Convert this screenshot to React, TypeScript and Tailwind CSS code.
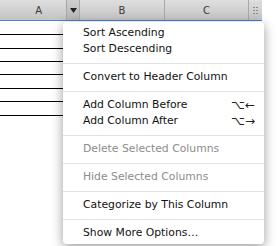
import React from 'react';

const font = { fontFamily: '"DejaVu Sans", "Liberation Sans", sans-serif' };

// y positions of the table's row lines, taken from the screenshot
const rowHeights = [14, 14, 13, 13, 14, 13, 14];

type Item = { label: string; shortcut?: string; disabled?: boolean } | 'sep';

const items: Item[] = [
  { label: 'Sort Ascending' },
  { label: 'Sort Descending' },
  'sep',
  { label: 'Convert to Header Column' },
  'sep',
  { label: 'Add Column Before', shortcut: '⌥←' },
  { label: 'Add Column After', shortcut: '⌥→' },
  'sep',
  { label: 'Delete Selected Columns', disabled: true },
  'sep',
  { label: 'Hide Selected Columns', disabled: true },
  'sep',
  { label: 'Categorize by This Column' },
  'sep',
  { label: 'Show More Options…' },
];

function Header() {
  return (
    <div className="flex h-[20px] w-[262px] bg-gradient-to-b from-[#dedede] to-[#c4c4c4] text-[10px] text-[#3a3a3a] border-b border-[#4a82d8] box-content">
      <div className="w-[67px] border-r border-[#a8a8a8] flex items-center justify-end pr-[24px]">A</div>
      <div className="w-[13px] border-r border-[#a8a8a8] bg-gradient-to-b from-[#cfcfcf] to-[#b6b6b6] flex items-center justify-center">
        <svg width="7" height="5" viewBox="0 0 7 5">
          <path d="M0 0 L7 0 L3.5 5 Z" fill="#222" />
        </svg>
      </div>
      <div className="w-[85px] border-r border-[#a8a8a8] flex items-center justify-center">B</div>
      <div className="w-[84px] border-r border-[#a8a8a8] flex items-center justify-center">C</div>
      <div className="flex-1 flex items-center justify-center">
        <svg width="7" height="9" viewBox="0 0 7 9">
          {[1, 4, 7].map(y => (
            <g key={y}>
              <rect x="1" y={y} width="2" height="1" fill="#8a8a8a" />
              <rect x="4" y={y} width="2" height="1" fill="#8a8a8a" />
            </g>
          ))}
        </svg>
      </div>
    </div>
  );
}

export default function App() {
  return (
    <div className="relative w-[279px] h-[246px] bg-white overflow-hidden" style={font}>
      <Header />

      <div className="w-[263px]">
        {rowHeights.map((h, i) => (
          <div key={i} className="border-b border-black" style={{ height: h }} />
        ))}
      </div>

      <div className="absolute left-[63px] top-[22px] w-[201px] bg-white rounded-[4px] shadow-[0_3px_12px_rgba(0,0,0,0.4)] pt-[3px] pb-[3px] text-[10.8px] text-[#111]">
        {items.map((it, i) =>
          it === 'sep' ? (
            <div key={i} className="h-px bg-[#e2e2e2] mt-[6px] mb-[5px]" />
          ) : (
            <div
              key={i}
              className={`h-4 leading-4 flex justify-between items-center pl-[20px] pr-[9px] ${it.disabled ? 'text-[#8c8c8c]' : ''}`}
            >
              <span>{it.label}</span>
              {it.shortcut && <span className="text-[12px] text-[#222]">{it.shortcut}</span>}
            </div>
          )
        )}
      </div>
    </div>
  );
}
